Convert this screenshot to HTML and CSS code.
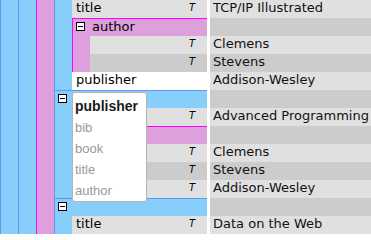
FILE: index.html
```html
<!DOCTYPE html>
<html>
<head>
<meta charset="utf-8">
<link rel="stylesheet" href="styles.css">
</head>
<body>
<div class="page">
  <div class="tree">
    <div class="level">
      <div class="level">
        <div class="level pink">
          <div class="node book cut">
            <div class="body">
              <div class="row g1"><span class="name">title</span><span class="t">T</span></div>
              <div class="node author">
                <div class="head"><svg class="icon" width="9" height="9" viewBox="0 0 9 9"><rect x="0.5" y="0.5" width="8" height="8" fill="#fff" stroke="#000"/><path d="M2 4.5H7" stroke="#000"/></svg><span class="label">author</span></div>
                <div class="kids">
                  <div class="row g1"><span class="name"></span><span class="t">T</span></div>
                  <div class="row g2"><span class="name"></span><span class="t">T</span></div>
                </div>
              </div>
              <div class="row w"><span class="name">publisher</span></div>
            </div>
          </div>
          <div class="node book">
            <div class="head"><svg class="icon" width="9" height="9" viewBox="0 0 9 9"><rect x="0.5" y="0.5" width="8" height="8" fill="#fff" stroke="#000"/><path d="M2 4.5H7" stroke="#000"/></svg></div>
            <div class="body">
              <div class="row g1"><span class="name">title</span><span class="t">T</span></div>
              <div class="node author">
                <div class="head"><svg class="icon" width="9" height="9" viewBox="0 0 9 9"><rect x="0.5" y="0.5" width="8" height="8" fill="#fff" stroke="#000"/><path d="M2 4.5H7" stroke="#000"/></svg><span class="label">author</span></div>
                <div class="kids">
                  <div class="row g1"><span class="name"></span><span class="t">T</span></div>
                  <div class="row g2"><span class="name"></span><span class="t">T</span></div>
                </div>
              </div>
              <div class="row g1"><span class="name">publisher</span><span class="t">T</span></div>
            </div>
          </div>
          <div class="node book">
            <div class="head"><svg class="icon" width="9" height="9" viewBox="0 0 9 9"><rect x="0.5" y="0.5" width="8" height="8" fill="#fff" stroke="#000"/><path d="M2 4.5H7" stroke="#000"/></svg></div>
            <div class="body">
              <div class="row g1"><span class="name">title</span><span class="t">T</span></div>
            </div>
          </div>
        </div>
      </div>
    </div>
  </div>
  <div class="values">
    <div class="val g1">TCP/IP Illustrated</div>
    <div class="val g2"></div>
    <div class="val g1">Clemens</div>
    <div class="val g2">Stevens</div>
    <div class="val g1">Addison-Wesley</div>
    <div class="val g2"></div>
    <div class="val g1">Advanced Programming</div>
    <div class="val g2"></div>
    <div class="val g1">Clemens</div>
    <div class="val g2">Stevens</div>
    <div class="val g1">Addison-Wesley</div>
    <div class="val g2"></div>
    <div class="val g1">Data on the Web</div>
  </div>
</div>
<div class="popup">
  <div class="opt cur">publisher</div>
  <div class="opt">bib</div>
  <div class="opt">book</div>
  <div class="opt">title</div>
  <div class="opt">author</div>
</div>
</body>
</html>
```

FILE: styles.css
```css
* { box-sizing: border-box; }
html, body { margin: 0; padding: 0; }
body {
  width: 371px;
  height: 234px;
  overflow: hidden;
  position: relative;
  background: #fff;
  font-family: "DejaVu Sans", Verdana, sans-serif;
  font-size: 13px;
  color: #000;
}
.page { display: flex; gap: 3px; }
.tree { width: 207px; flex: none; }

.level {
  border-left: 1px solid #6495ed;
  padding-left: 17px;
  background: #87cefa;
}
.level.pink {
  border-left-color: #ff00ff;
  background: #dda0dd;
}

.node { border-left: 1px solid; border-top: 1px solid; }
.node.book { border-color: #6495ed; background: #87cefa; }
.node.book.cut { border-top: none; }
.node.author { border-color: #ff00ff; background: #dda0dd; }

.head {
  height: 17px;
  display: flex;
  align-items: flex-start;
  padding-left: 3px;
  line-height: 15px;
}
.icon { display: block; margin-top: 3px; flex: none; }
.label { margin-left: 7px; }

.body { padding-left: 17px; }
.kids { padding-left: 17px; }

.row {
  height: 18px;
  display: flex;
  align-items: flex-start;
  padding-left: 4px;
  line-height: 16px;
}
.name { flex: 1; white-space: nowrap; }
.t {
  font-style: italic;
  font-size: 10px;
  line-height: 16px;
  width: 6px;
  margin-right: 12px;
}

.g1 { background: #e0e0e0; }
.g2 { background: #cccccc; }
.w { background: #ffffff; }

.values { flex: 1; min-width: 0; }
.val {
  height: 18px;
  padding-left: 3px;
  line-height: 16px;
  white-space: nowrap;
  overflow: hidden;
  color: #111;
}

.popup {
  position: absolute;
  left: 72px;
  top: 92px;
  width: 75px;
  height: 110px;
  border: 1px solid #b4b4b4;
  border-radius: 3px;
  background: #fff;
  padding: 3px 0 0 2px;
  overflow: hidden;
  font-family: "Liberation Sans", Arial, sans-serif;
}
.opt {
  font-size: 13px;
  line-height: 21px;
  color: #999;
  white-space: nowrap;
}
.opt.cur {
  font-size: 14px;
  font-weight: bold;
  color: #1a1a1a;
}
```
